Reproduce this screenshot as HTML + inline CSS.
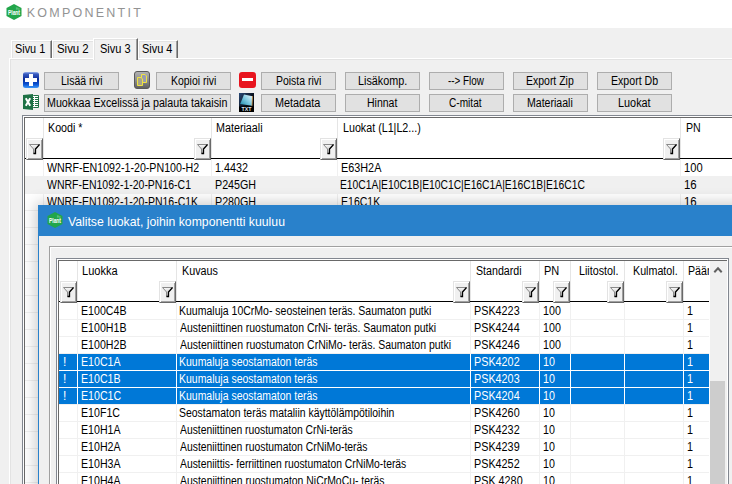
<!DOCTYPE html><html><head><meta charset="utf-8"><style>
html,body{margin:0;padding:0}
body{width:732px;height:484px;overflow:hidden;position:relative;background:#f0f0f0;font-family:"Liberation Sans",sans-serif}
.t{position:absolute;white-space:pre;transform-origin:0 0}
.btn{position:absolute;box-sizing:border-box;height:18px;background:#e1e1e1;border:1px solid #adadad}
.fb{position:absolute;width:17px;height:22px;box-sizing:border-box;background:#f0f0f0;border-top:1px solid #e3e3e3;border-left:1px solid #e3e3e3;box-shadow:inset 1px 1px 0 #fff, inset -1px -1px 0 #a0a0a0;border-right:1px solid #696969;border-bottom:1px solid #696969}
.fb svg{position:absolute;left:-1px;top:-1px}
</style></head><body><svg width="0" height="0" style="position:absolute"><defs><linearGradient id="gf" x1="0" y1="0" x2="0" y2="1"><stop offset="0" stop-color="#fafafa"/><stop offset="1" stop-color="#b0b0b0"/></linearGradient></defs></svg>
<div style="position:absolute;left:0px;top:0px;width:732px;height:28px;background:#fff"></div>
<svg style="position:absolute;left:6px;top:4px" width="16" height="16" viewBox="0 0 16 16"><polygon points="8,0 15.5,4 15.5,12 8,16 0.5,12 0.5,4" fill="#22a64a"/><text x="2" y="11" font-family="Liberation Sans" font-weight="bold" font-size="6.6" fill="#fff" textLength="12" lengthAdjust="spacingAndGlyphs">Plant</text><text x="10" y="5.6" font-family="Liberation Sans" font-size="3" fill="#9ad8a8">Ex</text></svg>
<div class="t" style="left:26.70px;top:7.42px;font-size:12.5px;line-height:12.5px;color:#939393;letter-spacing:2.25px">KOMPONENTIT</div>
<div style="position:absolute;left:9px;top:58px;width:740px;height:440px;background:#f0f0f0;border-left:1px solid #fff;border-top:1px solid #fff;box-sizing:border-box"></div>
<div style="position:absolute;left:10px;top:59px;width:740px;height:440px;border-left:1px solid #e3e3e3;border-top:1px solid #e3e3e3;box-sizing:border-box"></div>
<div style="position:absolute;left:11px;top:40px;width:41px;height:18px;box-sizing:border-box;background:#f0f0f0;border-left:1px solid #fff;border-top:1px solid #fff;border-right:1px solid #696969;box-shadow:inset -1px 0 0 #a0a0a0, inset 1px 1px 0 #e3e3e3"></div>
<div class="t" style="left:15.32px;top:42.84px;font-size:12px;line-height:12px;color:#000;transform:scaleX(0.9062);">Sivu 1</div>
<div style="position:absolute;left:52px;top:40px;width:42px;height:18px;box-sizing:border-box;background:#f0f0f0;border-left:1px solid #fff;border-top:1px solid #fff;box-shadow:inset 1px 1px 0 #e3e3e3"></div>
<div class="t" style="left:57.19px;top:42.84px;font-size:12px;line-height:12px;color:#000;transform:scaleX(0.9500);">Sivu 2</div>
<div style="position:absolute;left:138px;top:40px;width:40px;height:18px;box-sizing:border-box;background:#f0f0f0;border-left:1px solid #fff;border-top:1px solid #fff;border-right:1px solid #696969;box-shadow:inset -1px 0 0 #a0a0a0, inset 1px 1px 0 #e3e3e3"></div>
<div class="t" style="left:141.52px;top:42.84px;font-size:12px;line-height:12px;color:#000;transform:scaleX(0.9116);">Sivu 4</div>
<div style="position:absolute;left:93px;top:38px;width:45px;height:22px;box-sizing:border-box;background:#f0f0f0;border-left:1px solid #fff;border-top:1px solid #fff;border-right:1px solid #696969;box-shadow:inset -1px 0 0 #a0a0a0, inset 1px 1px 0 #e3e3e3"></div>
<div class="t" style="left:99.51px;top:42.84px;font-size:12px;line-height:12px;color:#000;transform:scaleX(0.9187);">Sivu 3</div>
<div class="btn" style="left:44px;top:72px;width:75px"></div>
<div class="t" style="left:60.62px;top:74.84px;font-size:12px;line-height:12px;color:#000;transform:scaleX(0.8769);">Lisää rivi</div>
<div class="btn" style="left:156px;top:72px;width:75px"></div>
<div class="t" style="left:171.13px;top:74.84px;font-size:12px;line-height:12px;color:#000;transform:scaleX(0.8697);">Kopioi rivi</div>
<div class="btn" style="left:261px;top:72px;width:75px"></div>
<div class="t" style="left:275.53px;top:74.84px;font-size:12px;line-height:12px;color:#000;transform:scaleX(0.8697);">Poista rivi</div>
<div class="btn" style="left:345px;top:72px;width:75px"></div>
<div class="t" style="left:357.50px;top:74.84px;font-size:12px;line-height:12px;color:#000;transform:scaleX(0.8986);">Lisäkomp.</div>
<div class="btn" style="left:429px;top:72px;width:75px"></div>
<div class="t" style="left:447.69px;top:74.84px;font-size:12px;line-height:12px;color:#000;transform:scaleX(0.8231);">--&gt; Flow</div>
<div class="btn" style="left:513px;top:72px;width:75px"></div>
<div class="t" style="left:525.73px;top:74.84px;font-size:12px;line-height:12px;color:#000;transform:scaleX(0.8732);">Export Zip</div>
<div class="btn" style="left:597px;top:72px;width:75px"></div>
<div class="t" style="left:610.52px;top:74.84px;font-size:12px;line-height:12px;color:#000;transform:scaleX(0.8827);">Export Db</div>
<div class="btn" style="left:44px;top:94px;width:187px"></div>
<div class="t" style="left:46.81px;top:96.84px;font-size:12px;line-height:12px;color:#000;transform:scaleX(0.8923);">Muokkaa Excelissä ja palauta takaisin</div>
<div class="btn" style="left:261px;top:94px;width:75px"></div>
<div class="t" style="left:275.40px;top:96.84px;font-size:12px;line-height:12px;color:#000;transform:scaleX(0.9041);">Metadata</div>
<div class="btn" style="left:345px;top:94px;width:75px"></div>
<div class="t" style="left:366.63px;top:96.84px;font-size:12px;line-height:12px;color:#000;transform:scaleX(0.8741);">Hinnat</div>
<div class="btn" style="left:429px;top:94px;width:75px"></div>
<div class="t" style="left:448.88px;top:96.84px;font-size:12px;line-height:12px;color:#000;transform:scaleX(0.8421);">C-mitat</div>
<div class="btn" style="left:513px;top:94px;width:75px"></div>
<div class="t" style="left:527.42px;top:96.84px;font-size:12px;line-height:12px;color:#000;transform:scaleX(0.8796);">Materiaali</div>
<div class="btn" style="left:597px;top:94px;width:75px"></div>
<div class="t" style="left:617.69px;top:96.84px;font-size:12px;line-height:12px;color:#000;transform:scaleX(0.9057);">Luokat</div>
<svg style="position:absolute;left:23px;top:72px" width="16" height="16" viewBox="0 0 16 16"><defs><linearGradient id="gp" x1="0" y1="0" x2="0" y2="1"><stop offset="0" stop-color="#9ab4ee"/><stop offset="0.12" stop-color="#3a5cc0"/><stop offset="0.45" stop-color="#0a2a98"/><stop offset="0.75" stop-color="#0a50d0"/><stop offset="1" stop-color="#3a96f8"/></linearGradient></defs><rect x="0" y="0" width="16" height="16" rx="2.5" fill="url(#gp)"/><rect x="2" y="6" width="12" height="4" fill="#fff"/><rect x="6" y="2" width="4" height="12" fill="#fff"/></svg>
<svg style="position:absolute;left:134px;top:71px" width="16" height="18" viewBox="0 0 16 18"><defs><linearGradient id="gc" x1="0" y1="0" x2="0" y2="1"><stop offset="0" stop-color="#b4b4b4"/><stop offset="0.55" stop-color="#8a8a8a"/><stop offset="1" stop-color="#5e5e5e"/></linearGradient></defs><rect x="0.5" y="0.5" width="15" height="17" rx="2.5" fill="url(#gc)" stroke="#5a5a5a" stroke-width="1"/><path d="M7.5 3.5 H11 L12.5 5 V11.5 H7.5 Z" fill="#9a9cb0" stroke="#f0e440" stroke-width="1"/><path d="M3.5 6.5 H7 L8.5 8 V14.5 H3.5 Z" fill="#a8a488" stroke="#f0e440" stroke-width="1"/></svg>
<svg style="position:absolute;left:239px;top:72px" width="17" height="16" viewBox="0 0 17 16"><rect x="0" y="0" width="17" height="16" rx="3" fill="#e8141e"/><rect x="3" y="6" width="11" height="3" fill="#fff"/></svg>
<svg style="position:absolute;left:23px;top:94px" width="16" height="16" viewBox="0 0 16 16"><path d="M0 1 L10 0 V16 L0 15 Z" fill="#1e7145"/><rect x="10" y="1" width="6" height="13" rx="1" fill="#1e7145"/><rect x="10" y="2" width="5" height="11" fill="#fff"/><path d="M12 3.5 H15 M12 5.5 H15 M12 7.5 H15 M12 9.5 H15 M12 11.5 H15 M10 3.5 H11 M10 5.5 H11 M10 7.5 H11 M10 9.5 H11 M10 11.5 H11" stroke="#1e7145" stroke-width="1"/><path d="M2.8 4.2 L7.2 11.8 M7.2 4.2 L2.8 11.8" stroke="#fff" stroke-width="2"/></svg>
<svg style="position:absolute;left:239px;top:93px" width="15" height="19" viewBox="0 0 15 19"><defs><linearGradient id="gm" x1="0" y1="1" x2="1" y2="0"><stop offset="0" stop-color="#1a88a8"/><stop offset="0.5" stop-color="#7cc8e0"/><stop offset="1" stop-color="#f0fbff"/></linearGradient><linearGradient id="gb" x1="0" y1="0" x2="1" y2="1"><stop offset="0" stop-color="#2a4a78"/><stop offset="0.6" stop-color="#050810"/></linearGradient></defs><rect x="0" y="0" width="15" height="19" fill="url(#gb)"/><path d="M5 1.5 L13.5 3.2 L13 12.8 L1.2 11 Z" fill="url(#gm)"/><path d="M13.5 3.2 L13 12.8" stroke="#d09040" stroke-width="0.8"/><rect x="0" y="13.5" width="15" height="5.5" fill="#000"/><text x="7.5" y="18.2" font-family="Liberation Sans" font-weight="bold" font-size="5" fill="#dde6f0" text-anchor="middle" textLength="10" lengthAdjust="spacingAndGlyphs">TXT</text></svg>
<div style="position:absolute;left:22px;top:115px;width:720px;height:380px;background:#828790"></div>
<div style="position:absolute;left:23px;top:116px;width:720px;height:380px;background:#fff"></div>
<div style="position:absolute;left:24px;top:117px;width:720px;height:380px;background:#696969"></div>
<div style="position:absolute;left:25px;top:118px;width:720px;height:380px;background:#fff"></div>
<div style="position:absolute;left:25px;top:176px;width:720px;height:18px;background:#f0f0f0"></div>
<div style="position:absolute;left:25px;top:176px;width:720px;height:1px;background:#f0f0f0"></div>
<div style="position:absolute;left:25px;top:193px;width:720px;height:1px;background:#f0f0f0"></div>
<div style="position:absolute;left:25px;top:210px;width:720px;height:1px;background:#f0f0f0"></div>
<div style="position:absolute;left:25px;top:227px;width:720px;height:1px;background:#f0f0f0"></div>
<div style="position:absolute;left:25px;top:244px;width:720px;height:1px;background:#f0f0f0"></div>
<div style="position:absolute;left:25px;top:261px;width:720px;height:1px;background:#f0f0f0"></div>
<div style="position:absolute;left:25px;top:278px;width:720px;height:1px;background:#f0f0f0"></div>
<div style="position:absolute;left:25px;top:295px;width:720px;height:1px;background:#f0f0f0"></div>
<div style="position:absolute;left:25px;top:312px;width:720px;height:1px;background:#f0f0f0"></div>
<div style="position:absolute;left:25px;top:329px;width:720px;height:1px;background:#f0f0f0"></div>
<div style="position:absolute;left:25px;top:346px;width:720px;height:1px;background:#f0f0f0"></div>
<div style="position:absolute;left:25px;top:363px;width:720px;height:1px;background:#f0f0f0"></div>
<div style="position:absolute;left:25px;top:380px;width:720px;height:1px;background:#f0f0f0"></div>
<div style="position:absolute;left:25px;top:397px;width:720px;height:1px;background:#f0f0f0"></div>
<div style="position:absolute;left:25px;top:414px;width:720px;height:1px;background:#f0f0f0"></div>
<div style="position:absolute;left:25px;top:431px;width:720px;height:1px;background:#f0f0f0"></div>
<div style="position:absolute;left:25px;top:448px;width:720px;height:1px;background:#f0f0f0"></div>
<div style="position:absolute;left:25px;top:465px;width:720px;height:1px;background:#f0f0f0"></div>
<div style="position:absolute;left:25px;top:482px;width:720px;height:1px;background:#f0f0f0"></div>
<div style="position:absolute;left:25px;top:499px;width:720px;height:1px;background:#f0f0f0"></div>
<div style="position:absolute;left:43px;top:118px;width:1px;height:40px;background:#e5e5e5"></div>
<div style="position:absolute;left:43px;top:159px;width:1px;height:340px;background:#f0f0f0"></div>
<div style="position:absolute;left:211px;top:118px;width:1px;height:40px;background:#e5e5e5"></div>
<div style="position:absolute;left:211px;top:159px;width:1px;height:340px;background:#f0f0f0"></div>
<div style="position:absolute;left:337px;top:118px;width:1px;height:40px;background:#e5e5e5"></div>
<div style="position:absolute;left:337px;top:159px;width:1px;height:340px;background:#f0f0f0"></div>
<div style="position:absolute;left:680px;top:118px;width:1px;height:40px;background:#e5e5e5"></div>
<div style="position:absolute;left:680px;top:159px;width:1px;height:340px;background:#f0f0f0"></div>
<div style="position:absolute;left:25px;top:158px;width:720px;height:1px;background:#000"></div>
<div class="fb" style="left:26px;top:138px"><svg width="17" height="22" viewBox="0 0 17 22"><path d="M3.5 6.5 H13.5 L9.5 11 V15.5 H7.5 V11 Z" fill="url(#gf)" stroke="#8a8a8a" stroke-width="1"/><path d="M13.5 6.5 L9.5 11 V15.5 H7.5" fill="none" stroke="#000" stroke-width="1.3"/></svg></div>
<div class="fb" style="left:194px;top:138px"><svg width="17" height="22" viewBox="0 0 17 22"><path d="M3.5 6.5 H13.5 L9.5 11 V15.5 H7.5 V11 Z" fill="url(#gf)" stroke="#8a8a8a" stroke-width="1"/><path d="M13.5 6.5 L9.5 11 V15.5 H7.5" fill="none" stroke="#000" stroke-width="1.3"/></svg></div>
<div class="fb" style="left:320px;top:138px"><svg width="17" height="22" viewBox="0 0 17 22"><path d="M3.5 6.5 H13.5 L9.5 11 V15.5 H7.5 V11 Z" fill="url(#gf)" stroke="#8a8a8a" stroke-width="1"/><path d="M13.5 6.5 L9.5 11 V15.5 H7.5" fill="none" stroke="#000" stroke-width="1.3"/></svg></div>
<div class="fb" style="left:663px;top:138px"><svg width="17" height="22" viewBox="0 0 17 22"><path d="M3.5 6.5 H13.5 L9.5 11 V15.5 H7.5 V11 Z" fill="url(#gf)" stroke="#8a8a8a" stroke-width="1"/><path d="M13.5 6.5 L9.5 11 V15.5 H7.5" fill="none" stroke="#000" stroke-width="1.3"/></svg></div>
<div class="t" style="left:48.31px;top:121.84px;font-size:12px;line-height:12px;color:#000;transform:scaleX(0.8907);">Koodi *</div>
<div class="t" style="left:216.10px;top:121.84px;font-size:12px;line-height:12px;color:#000;transform:scaleX(0.8955);">Materiaali</div>
<div class="t" style="left:342.61px;top:121.84px;font-size:12px;line-height:12px;color:#000;transform:scaleX(0.8924);">Luokat (L1|L2...)</div>
<div class="t" style="left:685.62px;top:121.84px;font-size:12px;line-height:12px;color:#000;transform:scaleX(0.8850);">PN</div>
<div class="t" style="left:47.18px;top:161.84px;font-size:12px;line-height:12px;color:#000;transform:scaleX(0.8874);">WNRF-EN1092-1-20-PN100-H2</div>
<div class="t" style="left:215.10px;top:161.84px;font-size:12px;line-height:12px;color:#000;transform:scaleX(0.8993);">1.4432</div>
<div class="t" style="left:340.60px;top:161.84px;font-size:12px;line-height:12px;color:#000;transform:scaleX(0.9034);">E63H2A</div>
<div class="t" style="left:684.07px;top:161.84px;font-size:12px;line-height:12px;color:#000;transform:scaleX(0.9280);">100</div>
<div class="t" style="left:47.18px;top:178.84px;font-size:12px;line-height:12px;color:#000;transform:scaleX(0.8744);">WNRF-EN1092-1-20-PN16-C1</div>
<div class="t" style="left:214.61px;top:178.84px;font-size:12px;line-height:12px;color:#000;transform:scaleX(0.8927);">P245GH</div>
<div class="t" style="left:340.14px;top:178.84px;font-size:12px;line-height:12px;color:#000;transform:scaleX(0.8589);">E10C1A|E10C1B|E10C1C|E16C1A|E16C1B|E16C1C</div>
<div class="t" style="left:684.05px;top:178.84px;font-size:12px;line-height:12px;color:#000;transform:scaleX(0.9532);">16</div>
<div class="t" style="left:47.18px;top:195.84px;font-size:12px;line-height:12px;color:#000;transform:scaleX(0.8750);">WNRF-EN1092-1-20-PN16-C1K</div>
<div class="t" style="left:214.61px;top:195.84px;font-size:12px;line-height:12px;color:#000;transform:scaleX(0.8927);">P280GH</div>
<div class="t" style="left:340.62px;top:195.84px;font-size:12px;line-height:12px;color:#000;transform:scaleX(0.8786);">E16C1K</div>
<div class="t" style="left:684.05px;top:195.84px;font-size:12px;line-height:12px;color:#000;transform:scaleX(0.9532);">16</div>
<div style="position:absolute;left:38px;top:205px;width:760px;height:300px;box-shadow:0 0 14px 2px rgba(0,0,0,0.22)"></div>
<div style="position:absolute;left:38px;top:205px;width:760px;height:300px;background:#2981cb"></div>
<div style="position:absolute;left:39px;top:236px;width:760px;height:300px;background:#f0f0f0"></div>
<svg style="position:absolute;left:47px;top:212px" width="16" height="16" viewBox="0 0 16 16"><polygon points="8,0 15.5,4 15.5,12 8,16 0.5,12 0.5,4" fill="#22a64a"/><text x="2" y="11" font-family="Liberation Sans" font-weight="bold" font-size="6.6" fill="#fff" textLength="12" lengthAdjust="spacingAndGlyphs">Plant</text><text x="10" y="5.6" font-family="Liberation Sans" font-size="3" fill="#9ad8a8">Ex</text></svg>
<div class="t" style="left:67.95px;top:215.63px;font-size:12.25px;line-height:12.25px;color:#fff;">Valitse luokat, joihin komponentti kuuluu</div>
<div style="position:absolute;left:49px;top:246px;width:700px;height:300px;border-left:1px solid #a0a0a0;border-top:1px solid #a0a0a0;box-sizing:border-box"></div>
<div style="position:absolute;left:50px;top:247px;width:700px;height:300px;border-left:1px solid #fff;border-top:1px solid #fff;box-sizing:border-box"></div>
<div style="position:absolute;left:56px;top:258px;width:673px;height:300px;background:#828790"></div>
<div style="position:absolute;left:57px;top:259px;width:671px;height:300px;background:#fff"></div>
<div style="position:absolute;left:58px;top:260px;width:669px;height:300px;background:#696969"></div>
<div style="position:absolute;left:59px;top:261px;width:668px;height:300px;background:#fff"></div>
<div style="position:absolute;left:59px;top:319px;width:650px;height:1px;background:#f0f0f0"></div>
<div style="position:absolute;left:59px;top:336px;width:650px;height:1px;background:#f0f0f0"></div>
<div style="position:absolute;left:59px;top:353px;width:650px;height:1px;background:#f0f0f0"></div>
<div style="position:absolute;left:59px;top:370px;width:650px;height:1px;background:#f0f0f0"></div>
<div style="position:absolute;left:59px;top:387px;width:650px;height:1px;background:#f0f0f0"></div>
<div style="position:absolute;left:59px;top:404px;width:650px;height:1px;background:#f0f0f0"></div>
<div style="position:absolute;left:59px;top:421px;width:650px;height:1px;background:#f0f0f0"></div>
<div style="position:absolute;left:59px;top:438px;width:650px;height:1px;background:#f0f0f0"></div>
<div style="position:absolute;left:59px;top:455px;width:650px;height:1px;background:#f0f0f0"></div>
<div style="position:absolute;left:59px;top:472px;width:650px;height:1px;background:#f0f0f0"></div>
<div style="position:absolute;left:59px;top:489px;width:650px;height:1px;background:#f0f0f0"></div>
<div style="position:absolute;left:59px;top:506px;width:650px;height:1px;background:#f0f0f0"></div>
<div style="position:absolute;left:77px;top:261px;width:1px;height:40px;background:#e5e5e5"></div>
<div style="position:absolute;left:77px;top:302px;width:1px;height:200px;background:#f0f0f0"></div>
<div style="position:absolute;left:176px;top:261px;width:1px;height:40px;background:#e5e5e5"></div>
<div style="position:absolute;left:176px;top:302px;width:1px;height:200px;background:#f0f0f0"></div>
<div style="position:absolute;left:470px;top:261px;width:1px;height:40px;background:#e5e5e5"></div>
<div style="position:absolute;left:470px;top:302px;width:1px;height:200px;background:#f0f0f0"></div>
<div style="position:absolute;left:539px;top:261px;width:1px;height:40px;background:#e5e5e5"></div>
<div style="position:absolute;left:539px;top:302px;width:1px;height:200px;background:#f0f0f0"></div>
<div style="position:absolute;left:570px;top:261px;width:1px;height:40px;background:#e5e5e5"></div>
<div style="position:absolute;left:570px;top:302px;width:1px;height:200px;background:#f0f0f0"></div>
<div style="position:absolute;left:624px;top:261px;width:1px;height:40px;background:#e5e5e5"></div>
<div style="position:absolute;left:624px;top:302px;width:1px;height:200px;background:#f0f0f0"></div>
<div style="position:absolute;left:683px;top:261px;width:1px;height:40px;background:#e5e5e5"></div>
<div style="position:absolute;left:683px;top:302px;width:1px;height:200px;background:#f0f0f0"></div>
<div style="position:absolute;left:59px;top:354px;width:650px;height:16px;background:#0078d7"></div>
<div style="position:absolute;left:59px;top:371px;width:650px;height:16px;background:#0078d7"></div>
<div style="position:absolute;left:59px;top:388px;width:650px;height:16px;background:#0078d7"></div>
<div style="position:absolute;left:59px;top:370px;width:650px;height:1px;background:#fff"></div>
<div style="position:absolute;left:59px;top:387px;width:650px;height:1px;background:#fff"></div>
<div style="position:absolute;left:77px;top:354px;width:1px;height:50px;background:#fff"></div>
<div style="position:absolute;left:176px;top:354px;width:1px;height:50px;background:#fff"></div>
<div style="position:absolute;left:470px;top:354px;width:1px;height:50px;background:#fff"></div>
<div style="position:absolute;left:539px;top:354px;width:1px;height:50px;background:#fff"></div>
<div style="position:absolute;left:570px;top:354px;width:1px;height:50px;background:#fff"></div>
<div style="position:absolute;left:624px;top:354px;width:1px;height:50px;background:#fff"></div>
<div style="position:absolute;left:683px;top:354px;width:1px;height:50px;background:#fff"></div>
<div style="position:absolute;left:59px;top:301px;width:650px;height:1px;background:#000"></div>
<div class="fb" style="left:60px;top:281px"><svg width="17" height="22" viewBox="0 0 17 22"><path d="M3.5 6.5 H13.5 L9.5 11 V15.5 H7.5 V11 Z" fill="url(#gf)" stroke="#8a8a8a" stroke-width="1"/><path d="M13.5 6.5 L9.5 11 V15.5 H7.5" fill="none" stroke="#000" stroke-width="1.3"/></svg></div>
<div class="fb" style="left:159px;top:281px"><svg width="17" height="22" viewBox="0 0 17 22"><path d="M3.5 6.5 H13.5 L9.5 11 V15.5 H7.5 V11 Z" fill="url(#gf)" stroke="#8a8a8a" stroke-width="1"/><path d="M13.5 6.5 L9.5 11 V15.5 H7.5" fill="none" stroke="#000" stroke-width="1.3"/></svg></div>
<div class="fb" style="left:453px;top:281px"><svg width="17" height="22" viewBox="0 0 17 22"><path d="M3.5 6.5 H13.5 L9.5 11 V15.5 H7.5 V11 Z" fill="url(#gf)" stroke="#8a8a8a" stroke-width="1"/><path d="M13.5 6.5 L9.5 11 V15.5 H7.5" fill="none" stroke="#000" stroke-width="1.3"/></svg></div>
<div class="fb" style="left:522px;top:281px"><svg width="17" height="22" viewBox="0 0 17 22"><path d="M3.5 6.5 H13.5 L9.5 11 V15.5 H7.5 V11 Z" fill="url(#gf)" stroke="#8a8a8a" stroke-width="1"/><path d="M13.5 6.5 L9.5 11 V15.5 H7.5" fill="none" stroke="#000" stroke-width="1.3"/></svg></div>
<div class="fb" style="left:553px;top:281px"><svg width="17" height="22" viewBox="0 0 17 22"><path d="M3.5 6.5 H13.5 L9.5 11 V15.5 H7.5 V11 Z" fill="url(#gf)" stroke="#8a8a8a" stroke-width="1"/><path d="M13.5 6.5 L9.5 11 V15.5 H7.5" fill="none" stroke="#000" stroke-width="1.3"/></svg></div>
<div class="fb" style="left:607px;top:281px"><svg width="17" height="22" viewBox="0 0 17 22"><path d="M3.5 6.5 H13.5 L9.5 11 V15.5 H7.5 V11 Z" fill="url(#gf)" stroke="#8a8a8a" stroke-width="1"/><path d="M13.5 6.5 L9.5 11 V15.5 H7.5" fill="none" stroke="#000" stroke-width="1.3"/></svg></div>
<div class="fb" style="left:666px;top:281px"><svg width="17" height="22" viewBox="0 0 17 22"><path d="M3.5 6.5 H13.5 L9.5 11 V15.5 H7.5 V11 Z" fill="url(#gf)" stroke="#8a8a8a" stroke-width="1"/><path d="M13.5 6.5 L9.5 11 V15.5 H7.5" fill="none" stroke="#000" stroke-width="1.3"/></svg></div>
<div class="t" style="left:82.48px;top:264.84px;font-size:12px;line-height:12px;color:#000;transform:scaleX(0.9219);">Luokka</div>
<div class="t" style="left:181.50px;top:264.84px;font-size:12px;line-height:12px;color:#000;transform:scaleX(0.8987);">Kuvaus</div>
<div class="t" style="left:475.53px;top:264.84px;font-size:12px;line-height:12px;color:#000;transform:scaleX(0.8884);">Standardi</div>
<div class="t" style="left:544.38px;top:264.84px;font-size:12px;line-height:12px;color:#000;transform:scaleX(0.9153);">PN</div>
<div class="t" style="left:579.10px;top:264.84px;font-size:12px;line-height:12px;color:#000;transform:scaleX(0.8952);">Liitostol.</div>
<div class="t" style="left:633.11px;top:264.84px;font-size:12px;line-height:12px;color:#000;transform:scaleX(0.8917);">Kulmatol.</div>
<div style="position:absolute;left:683px;top:261px;width:26px;height:40px;overflow:hidden">
<div class="t" style="left:5.32px;top:3.84px;font-size:12px;line-height:12px;color:#000;transform:scaleX(0.8850);">Päänimike</div>
</div>
<div class="t" style="left:80.61px;top:304.84px;font-size:12px;line-height:12px;color:#000;transform:scaleX(0.8850);">E100C4B</div>
<div class="t" style="left:179.22px;top:304.84px;font-size:12px;line-height:12px;color:#000;transform:scaleX(0.8757);">Kuumaluja 10CrMo- seosteinen teräs. Saumaton putki</div>
<div class="t" style="left:473.50px;top:304.84px;font-size:12px;line-height:12px;color:#000;transform:scaleX(0.9000);">PSK4223</div>
<div class="t" style="left:543.11px;top:304.84px;font-size:12px;line-height:12px;color:#000;transform:scaleX(0.8900);">100</div>
<div class="t" style="left:687.10px;top:304.84px;font-size:12px;line-height:12px;color:#000;transform:scaleX(0.9000);">1</div>
<div class="t" style="left:80.61px;top:321.84px;font-size:12px;line-height:12px;color:#000;transform:scaleX(0.8850);">E100H1B</div>
<div class="t" style="left:179.88px;top:321.84px;font-size:12px;line-height:12px;color:#000;transform:scaleX(0.8725);">Austeniittinen ruostumaton CrNi- teräs. Saumaton putki</div>
<div class="t" style="left:473.50px;top:321.84px;font-size:12px;line-height:12px;color:#000;transform:scaleX(0.9000);">PSK4244</div>
<div class="t" style="left:543.11px;top:321.84px;font-size:12px;line-height:12px;color:#000;transform:scaleX(0.8900);">100</div>
<div class="t" style="left:687.10px;top:321.84px;font-size:12px;line-height:12px;color:#000;transform:scaleX(0.9000);">1</div>
<div class="t" style="left:80.61px;top:338.84px;font-size:12px;line-height:12px;color:#000;transform:scaleX(0.8850);">E100H2B</div>
<div class="t" style="left:179.88px;top:338.84px;font-size:12px;line-height:12px;color:#000;transform:scaleX(0.8741);">Austeniittinen ruostumaton CrNiMo- teräs. Saumaton putki</div>
<div class="t" style="left:473.50px;top:338.84px;font-size:12px;line-height:12px;color:#000;transform:scaleX(0.9000);">PSK4246</div>
<div class="t" style="left:543.11px;top:338.84px;font-size:12px;line-height:12px;color:#000;transform:scaleX(0.8900);">100</div>
<div class="t" style="left:687.10px;top:338.84px;font-size:12px;line-height:12px;color:#000;transform:scaleX(0.9000);">1</div>
<div class="t" style="left:63.00px;top:355.84px;font-size:12px;line-height:12px;color:#fff;">!</div>
<div class="t" style="left:80.61px;top:355.84px;font-size:12px;line-height:12px;color:#fff;transform:scaleX(0.8850);">E10C1A</div>
<div class="t" style="left:179.23px;top:355.84px;font-size:12px;line-height:12px;color:#fff;transform:scaleX(0.8731);">Kuumaluja seostamaton teräs</div>
<div class="t" style="left:473.50px;top:355.84px;font-size:12px;line-height:12px;color:#fff;transform:scaleX(0.9000);">PSK4202</div>
<div class="t" style="left:543.11px;top:355.84px;font-size:12px;line-height:12px;color:#fff;transform:scaleX(0.8900);">10</div>
<div class="t" style="left:687.10px;top:355.84px;font-size:12px;line-height:12px;color:#fff;transform:scaleX(0.9000);">1</div>
<div class="t" style="left:63.00px;top:372.84px;font-size:12px;line-height:12px;color:#fff;">!</div>
<div class="t" style="left:80.61px;top:372.84px;font-size:12px;line-height:12px;color:#fff;transform:scaleX(0.8850);">E10C1B</div>
<div class="t" style="left:179.23px;top:372.84px;font-size:12px;line-height:12px;color:#fff;transform:scaleX(0.8731);">Kuumaluja seostamaton teräs</div>
<div class="t" style="left:473.50px;top:372.84px;font-size:12px;line-height:12px;color:#fff;transform:scaleX(0.9000);">PSK4203</div>
<div class="t" style="left:543.11px;top:372.84px;font-size:12px;line-height:12px;color:#fff;transform:scaleX(0.8900);">10</div>
<div class="t" style="left:687.10px;top:372.84px;font-size:12px;line-height:12px;color:#fff;transform:scaleX(0.9000);">1</div>
<div class="t" style="left:63.00px;top:389.84px;font-size:12px;line-height:12px;color:#fff;">!</div>
<div class="t" style="left:80.61px;top:389.84px;font-size:12px;line-height:12px;color:#fff;transform:scaleX(0.8850);">E10C1C</div>
<div class="t" style="left:179.23px;top:389.84px;font-size:12px;line-height:12px;color:#fff;transform:scaleX(0.8731);">Kuumaluja seostamaton teräs</div>
<div class="t" style="left:473.50px;top:389.84px;font-size:12px;line-height:12px;color:#fff;transform:scaleX(0.9000);">PSK4204</div>
<div class="t" style="left:543.11px;top:389.84px;font-size:12px;line-height:12px;color:#fff;transform:scaleX(0.8900);">10</div>
<div class="t" style="left:687.10px;top:389.84px;font-size:12px;line-height:12px;color:#fff;transform:scaleX(0.9000);">1</div>
<div class="t" style="left:80.61px;top:406.84px;font-size:12px;line-height:12px;color:#000;transform:scaleX(0.8850);">E10F1C</div>
<div class="t" style="left:179.45px;top:406.84px;font-size:12px;line-height:12px;color:#000;transform:scaleX(0.8703);">Seostamaton teräs mataliin käyttölämpötiloihin</div>
<div class="t" style="left:473.50px;top:406.84px;font-size:12px;line-height:12px;color:#000;transform:scaleX(0.9000);">PSK4260</div>
<div class="t" style="left:543.11px;top:406.84px;font-size:12px;line-height:12px;color:#000;transform:scaleX(0.8900);">10</div>
<div class="t" style="left:687.10px;top:406.84px;font-size:12px;line-height:12px;color:#000;transform:scaleX(0.9000);">1</div>
<div class="t" style="left:80.61px;top:423.84px;font-size:12px;line-height:12px;color:#000;transform:scaleX(0.8850);">E10H1A</div>
<div class="t" style="left:179.88px;top:423.84px;font-size:12px;line-height:12px;color:#000;transform:scaleX(0.8632);">Austeniittinen ruostumaton CrNi-teräs</div>
<div class="t" style="left:473.50px;top:423.84px;font-size:12px;line-height:12px;color:#000;transform:scaleX(0.9000);">PSK4232</div>
<div class="t" style="left:543.11px;top:423.84px;font-size:12px;line-height:12px;color:#000;transform:scaleX(0.8900);">10</div>
<div class="t" style="left:687.10px;top:423.84px;font-size:12px;line-height:12px;color:#000;transform:scaleX(0.9000);">1</div>
<div class="t" style="left:80.61px;top:440.84px;font-size:12px;line-height:12px;color:#000;transform:scaleX(0.8850);">E10H2A</div>
<div class="t" style="left:179.88px;top:440.84px;font-size:12px;line-height:12px;color:#000;transform:scaleX(0.8648);">Austeniittinen ruostumaton CrNiMo-teräs</div>
<div class="t" style="left:473.50px;top:440.84px;font-size:12px;line-height:12px;color:#000;transform:scaleX(0.9000);">PSK4239</div>
<div class="t" style="left:543.11px;top:440.84px;font-size:12px;line-height:12px;color:#000;transform:scaleX(0.8900);">10</div>
<div class="t" style="left:687.10px;top:440.84px;font-size:12px;line-height:12px;color:#000;transform:scaleX(0.9000);">1</div>
<div class="t" style="left:80.61px;top:457.84px;font-size:12px;line-height:12px;color:#000;transform:scaleX(0.8850);">E10H3A</div>
<div class="t" style="left:179.88px;top:457.84px;font-size:12px;line-height:12px;color:#000;transform:scaleX(0.8611);">Austeniittis- ferriittinen ruostumaton CrNiMo-teräs</div>
<div class="t" style="left:473.50px;top:457.84px;font-size:12px;line-height:12px;color:#000;transform:scaleX(0.9000);">PSK4252</div>
<div class="t" style="left:543.11px;top:457.84px;font-size:12px;line-height:12px;color:#000;transform:scaleX(0.8900);">10</div>
<div class="t" style="left:687.10px;top:457.84px;font-size:12px;line-height:12px;color:#000;transform:scaleX(0.9000);">1</div>
<div class="t" style="left:80.61px;top:474.84px;font-size:12px;line-height:12px;color:#000;transform:scaleX(0.8850);">E10H4A</div>
<div class="t" style="left:179.88px;top:474.84px;font-size:12px;line-height:12px;color:#000;transform:scaleX(0.8686);">Austeniittinen ruostumaton NiCrMoCu- teräs</div>
<div class="t" style="left:473.50px;top:474.84px;font-size:12px;line-height:12px;color:#000;transform:scaleX(0.9000);">PSK 4280</div>
<div class="t" style="left:543.11px;top:474.84px;font-size:12px;line-height:12px;color:#000;transform:scaleX(0.8900);">10</div>
<div class="t" style="left:687.10px;top:474.84px;font-size:12px;line-height:12px;color:#000;transform:scaleX(0.9000);">1</div>
<div style="position:absolute;left:709px;top:261px;width:1px;height:240px;background:#fff"></div>
<div style="position:absolute;left:710px;top:261px;width:17px;height:240px;background:#f0f0f0"></div>
<div style="position:absolute;left:710px;top:381px;width:15px;height:120px;background:#cdcdcd"></div>
<svg style="position:absolute;left:710px;top:261px" width="17" height="17" viewBox="0 0 17 17"><path d="M4.3 11.2 L8 7.3 L11.7 11.2" fill="none" stroke="#606060" stroke-width="2"/></svg>
<div style="position:absolute;left:727px;top:261px;width:1px;height:240px;background:#fff"></div>
</body></html>
